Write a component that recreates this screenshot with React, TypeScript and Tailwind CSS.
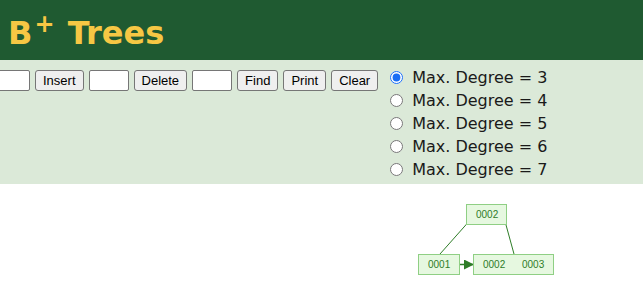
import React from 'react'

const degrees = [3, 4, 5, 6, 7]

function TreeCanvas() {
  const box = 'fill-[#e6f8e0] stroke-[#8fcf84]'
  return (
    <svg width="643" height="105" className="block">
      <defs>
        <marker id="arr" markerWidth="10" markerHeight="10" refX="9" refY="5" orient="auto" markerUnits="userSpaceOnUse">
          <path d="M0,0 L10,5 L0,10 z" fill="#2f7d28" />
        </marker>
      </defs>
      <g transform="translate(0,-184)">
        <line x1="472" y1="218" x2="440" y2="254" stroke="#2f7d28" strokeWidth="1" />
        <line x1="503" y1="214" x2="514" y2="254" stroke="#2f7d28" strokeWidth="1" />
        <line x1="460" y1="264.5" x2="473" y2="264.5" stroke="#2f7d28" strokeWidth="1.5" markerEnd="url(#arr)" />
        <rect x="466.5" y="204.5" width="40" height="20" className={box} />
        <rect x="418.5" y="254.5" width="41" height="20" className={box} />
        <rect x="473.5" y="254.5" width="80" height="20" className={box} />
        <g fill="#2f7d28" style={{ fontFamily: '"Liberation Sans", Arial, sans-serif', fontSize: 10 }}>
          <text x="476" y="218">0002</text>
          <text x="428" y="268">0001</text>
          <text x="483" y="268">0002</text>
          <text x="522" y="268">0003</text>
        </g>
      </g>
    </svg>
  )
}

export default function App() {
  const btn =
    'h-[21px] px-[7px] text-[13px] leading-none text-black bg-[#efefef] border border-[#767676] rounded-[3px]'
  const input = 'h-[21px] w-[40px] bg-white border border-[#767676] rounded-[2px]'
  return (
    <div className="w-[643px] h-[289px] overflow-hidden bg-white" style={{ fontFamily: '"DejaVu Sans", Verdana, sans-serif' }}>
      <header className="h-[60px] bg-[#1f5a31] flex items-center pl-[8px] pt-[6px]">
        <h1 className="text-[32px] font-bold text-[#f6c744] leading-none">
          B<sup className="text-[24px] font-semibold relative -top-[12px] ml-[2px] mr-[2px]">+</sup> Trees
        </h1>
      </header>

      <div className="h-[124px] bg-[#dbe9d8] flex items-start">
        <div
          className="flex items-center gap-[5px] pt-[10px] -ml-[10px]"
          style={{ fontFamily: '"Liberation Sans", Arial, sans-serif' }}
        >
          <input className={input} />
          <button className={btn}>Insert</button>
          <input className={input} />
          <button className={btn}>Delete</button>
          <input className={input} />
          <button className={btn}>Find</button>
          <button className={btn}>Print</button>
          <button className={btn}>Clear</button>
        </div>

        <div className="ml-[12px] pt-[6px] flex flex-col">
          {degrees.map((d) => (
            <label key={d} className="h-[23px] flex items-center text-[16px] text-[#1a1a1a]">
              <input
                type="radio"
                name="deg"
                defaultChecked={d === 3}
                className="w-[13px] h-[13px] m-0 mr-[9px] accent-[#1a6ef5]"
              />
              Max. Degree = {d}
            </label>
          ))}
        </div>
      </div>

      <TreeCanvas />
    </div>
  )
}
